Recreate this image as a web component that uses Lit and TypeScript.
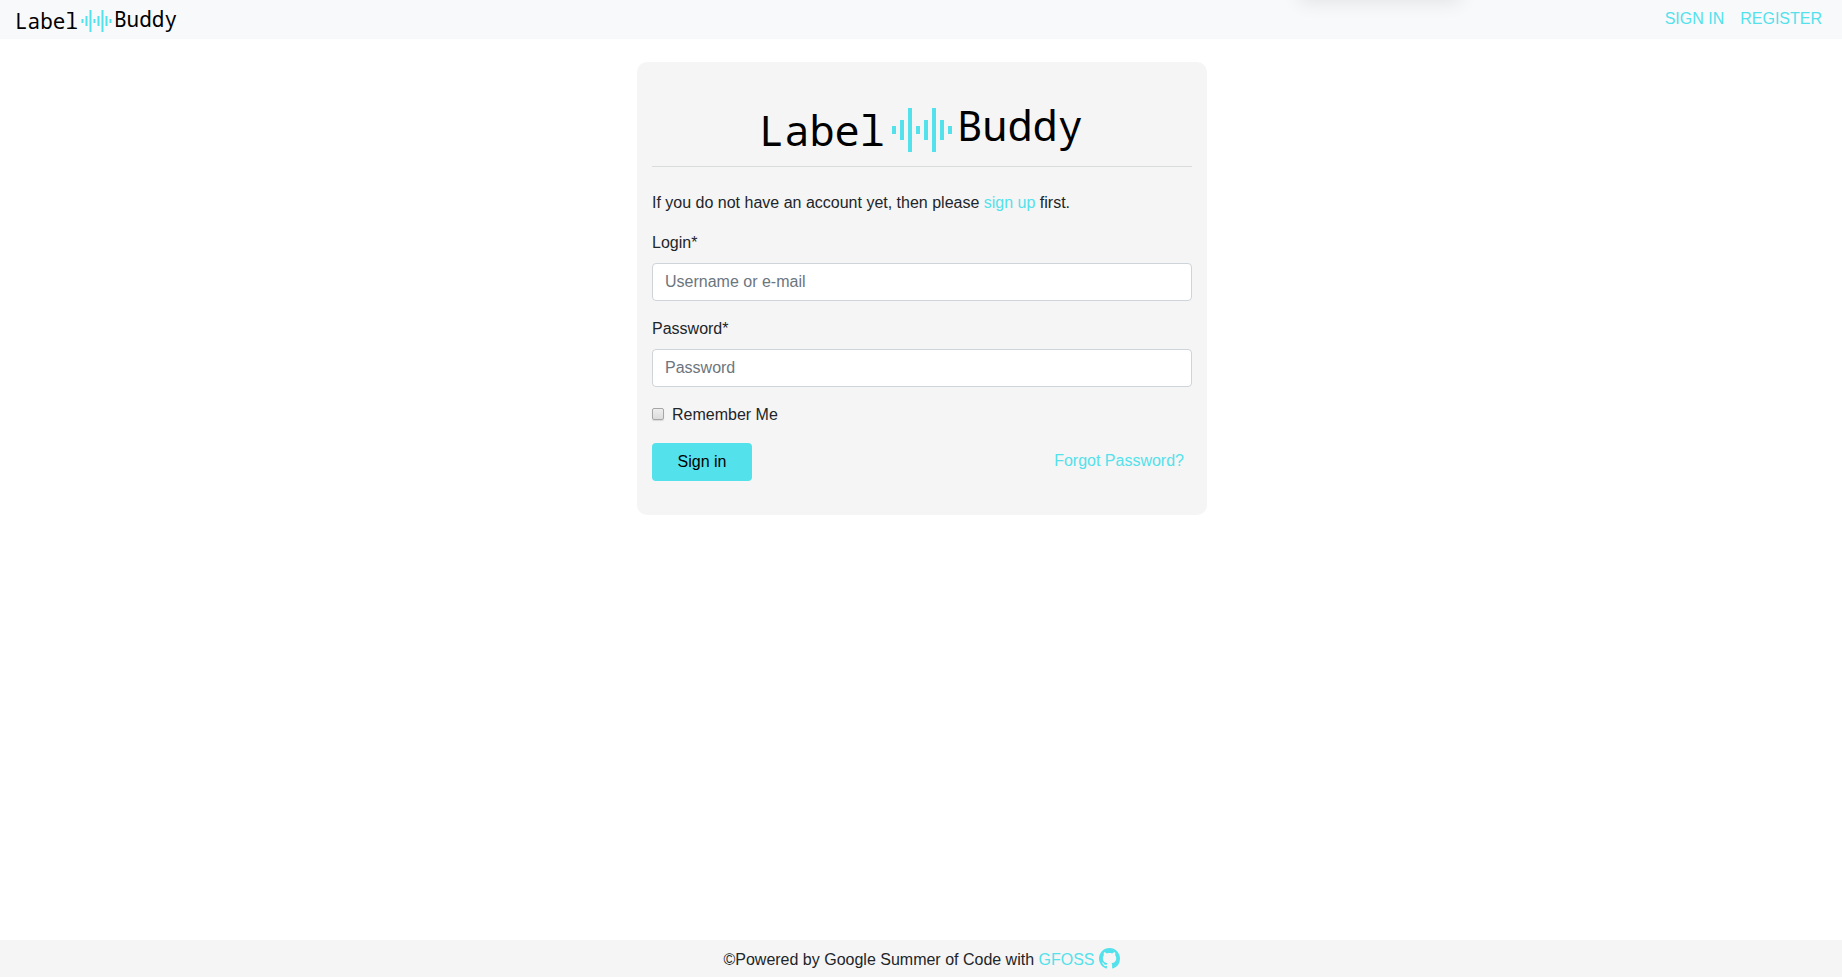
import { LitElement, html, css, svg } from "lit";
import { customElement } from "lit/decorators.js";

// Equaliser bars of the logo: top edge and height, left to right.
const BARS = [
  [22, 8],
  [16, 20],
  [4, 44],
  [22, 8],
  [16, 20],
  [4, 44],
  [16, 20],
  [22, 8],
];

@customElement("brand-logo")
export class BrandLogo extends LitElement {
  static styles = css`
    :host {
      display: block;
    }
    .logo {
      display: block;
      width: 100%;
      height: auto;
      overflow: visible;
    }
    .word {
      font: 42px "Noto Sans Mono", "Droid Sans Mono", "DejaVu Sans Mono", monospace;
      fill: #000;
    }
    .bar {
      fill: #53e1eb;
    }
  `;

  render() {
    return html`
      <svg class="logo" viewBox="0 0 330 52" role="img" aria-label="Label Buddy">
        <text class="word" x="2" y="42">Label</text>
        ${BARS.map(
          ([y, h], i) => svg`<rect class="bar" x=${135 + i * 8} y=${y} width="4" height=${h}></rect>`
        )}
        <text class="word" x="200" y="37">Buddy</text>
      </svg>
    `;
  }
}

@customElement("app-root")
export class AppRoot extends LitElement {
  static styles = css`
    :host {
      display: flex;
      flex-direction: column;
      min-height: 100vh;
      background: #fff;
      color: #212529;
      font: 16px/24px "Liberation Sans", Arial, sans-serif;
    }
    * {
      box-sizing: border-box;
    }
    a {
      color: #53e1eb;
      text-decoration: none;
    }
    .nav {
      position: relative;
      overflow: hidden;
      display: flex;
      justify-content: space-between;
      align-items: flex-start;
      padding: 7px 20px 5px 14px;
      background: #f8f9fb;
    }
    .nav::before {
      content: "";
      position: absolute;
      top: -20px;
      right: 382px;
      width: 160px;
      height: 16px;
      box-shadow: 0 4px 20px rgba(0, 0, 0, 0.12);
    }
    .home {
      width: 165px;
      padding-top: 1px;
    }
    .links {
      display: flex;
      gap: 16px;
    }
    .main {
      flex: 1;
      padding: 23px 14px 23px 16px;
    }
    .card {
      max-width: 570px;
      margin: 0 auto;
      padding: 42px 15px 34px;
      border-radius: 10px;
      background: #f5f5f5;
    }
    .brand {
      max-width: 330px;
      margin: 0 auto;
    }
    .rule {
      height: 1px;
      margin: 10px 0 24px;
      border: 0;
      background: #dadbdb;
    }
    .intro {
      margin: 0 0 16px;
    }
    .field {
      display: flex;
      flex-direction: column;
      gap: 8px;
      margin-bottom: 16px;
    }
    .input {
      width: 100%;
      height: 38px;
      padding: 6px 12px;
      border: 1px solid #ced4da;
      border-radius: 4px;
      background: #fff;
      color: #495057;
      font: inherit;
    }
    .input::placeholder {
      color: #6c757d;
      opacity: 1;
    }
    .remember {
      display: flex;
      align-items: center;
      gap: 8px;
      margin-bottom: 16px;
    }
    .check {
      appearance: none;
      width: 12px;
      height: 12px;
      margin: 0 0 2px;
      border: 1px solid #a6a6a6;
      border-radius: 2px;
      background: linear-gradient(#eee, #dcdcdc);
      box-shadow: 0 1px 1px rgba(0, 0, 0, 0.12);
    }
    .check:checked {
      background: #53e1eb;
    }
    .actions {
      display: flex;
      justify-content: space-between;
      align-items: center;
      padding-right: 8px;
    }
    .forgot {
      padding-bottom: 2px;
    }
    .submit {
      width: 100px;
      height: 38px;
      padding: 0;
      border: 0;
      border-radius: 4px;
      background: #53e1eb;
      color: #000;
      font: inherit;
      cursor: pointer;
    }
    .footer {
      display: flex;
      justify-content: center;
      align-items: flex-start;
      gap: 4px;
      padding: 8px 15px 5px 16px;
      background: #f5f5f5;
    }
    .github {
      display: block;
      width: 21px;
      height: 21px;
      fill: #53e1eb;
    }
  `;

  render() {
    return html`
      <nav class="nav">
        <a class="home" href="#"><brand-logo></brand-logo></a>
        <div class="links">
          <a href="#signin">SIGN IN</a>
          <a href="#register">REGISTER</a>
        </div>
      </nav>
      <main class="main">
        <div class="card">
          <brand-logo class="brand"></brand-logo>
          <hr class="rule" />
          <p class="intro">
            If you do not have an account yet, then please <a href="#signup">sign up</a> first.
          </p>
          <form @submit=${(e: Event) => e.preventDefault()}>
            <div class="field">
              <label for="login">Login*</label>
              <input class="input" id="login" type="text" placeholder="Username or e-mail" />
            </div>
            <div class="field">
              <label for="password">Password*</label>
              <input class="input" id="password" type="password" placeholder="Password" />
            </div>
            <div class="remember">
              <input class="check" id="remember" type="checkbox" />
              <label for="remember">Remember Me</label>
            </div>
            <div class="actions">
              <button class="submit" type="submit">Sign in</button>
              <a class="forgot" href="#forgot">Forgot Password?</a>
            </div>
          </form>
        </div>
      </main>
      <footer class="footer">
        <span>©Powered by Google Summer of Code with <a href="#gfoss">GFOSS</a></span>
        <a href="#github" aria-label="GitHub">
          <svg class="github" viewBox="0 0 16 16" aria-hidden="true">
            <path
              d="M8 0C3.58 0 0 3.58 0 8c0 3.54 2.29 6.53 5.47 7.59.4.07.55-.17.55-.38 0-.19-.01-.82-.01-1.49-2.01.37-2.53-.49-2.69-.94-.09-.23-.48-.94-.82-1.13-.28-.15-.68-.52-.01-.53.63-.01 1.08.58 1.23.82.72 1.21 1.87.87 2.33.66.07-.52.28-.87.51-1.07-1.78-.2-3.64-.89-3.64-3.95 0-.87.31-1.59.82-2.15-.08-.2-.36-1.02.08-2.12 0 0 .67-.21 2.2.82.64-.18 1.32-.27 2-.27s1.36.09 2 .27c1.53-1.04 2.2-.82 2.2-.82.44 1.1.16 1.92.08 2.12.51.56.82 1.27.82 2.15 0 3.07-1.87 3.75-3.65 3.95.29.25.54.73.54 1.48 0 1.07-.01 1.93-.01 2.2 0 .21.15.46.55.38A8.01 8.01 0 0 0 16 8c0-4.42-3.58-8-8-8z"
            ></path>
          </svg>
        </a>
      </footer>
    `;
  }
}
